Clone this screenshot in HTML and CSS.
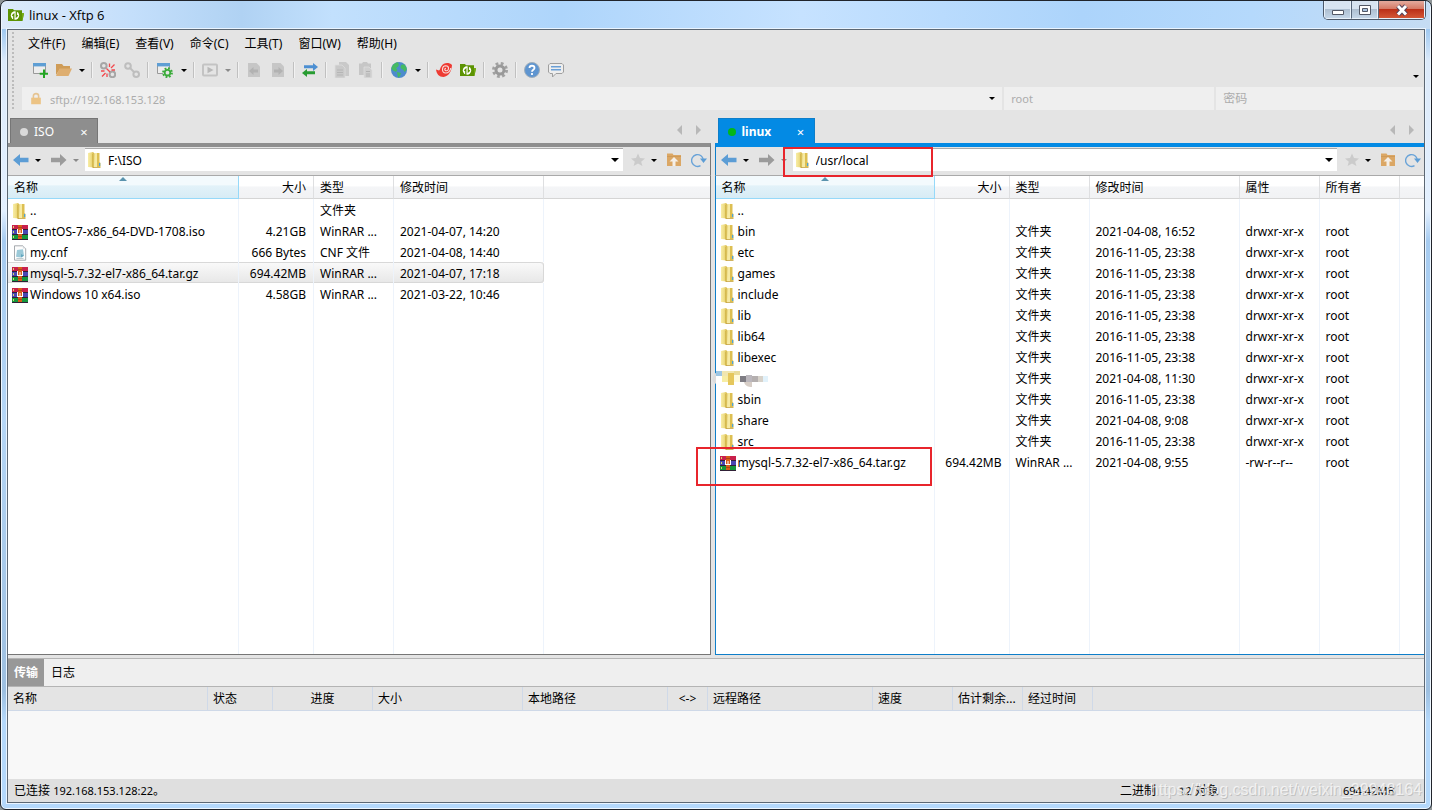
FILE: index.html
```html
<!DOCTYPE html>
<html lang="zh-CN">
<head>
<meta charset="utf-8">
<title>linux - Xftp 6</title>
<link rel="stylesheet" href="styles.css">
</head>
<body>
<svg class="defs" aria-hidden="true">
  <defs>
    <linearGradient id="gFold" x1="0" x2="1"><stop offset="0" stop-color="#f8eda6"/><stop offset=".55" stop-color="#eedc83"/><stop offset="1" stop-color="#d3b340"/></linearGradient>
    <linearGradient id="gLeaf" x1="0" x2="1"><stop offset="0" stop-color="#c9a938"/><stop offset="1" stop-color="#f3e390"/></linearGradient>
  </defs>
  <symbol id="folder" viewBox="0 0 16 16"><path fill="url(#gFold)" d="M1 1 6 0l1 1v14.500L1 15z"/><path fill="url(#gLeaf)" d="M5.500 2 8 1v14l-2.500 1z"/><path fill="#f6eaa4" d="M8 1h2v14H7z"/><path fill="#ddbf52" d="M10 1h2.500v9l1 1v4H10z"/><path fill="#c5a13a" d="M6 15h7.500v.8H6z"/><path fill="#4ca3dc" d="M12 11h1.200v3H12z"/></symbol>
  <symbol id="rar" viewBox="0 0 16 16"><path fill="#c9204c" d="M0 1h16v5H0z"/><path fill="#4846b4" d="M0 6h16v4H0z"/><path fill="#15963c" d="M0 10h16v5H0z"/><path fill="#302036" d="M0 5h16v1H0zM0 10h16v1H0zM0 15h16v1H0z"/><path fill="#d6dc68" d="M1 2h1v2H1zM1 7h1v2H1zM1 12h1v2H1z"/><path fill="#d95c18" d="M6 1h4v14H6z"/><path fill="#a9471b" d="M6 3h4v1H6zM6 12h4v1H6z"/><path fill="#fff" d="M5 5h1v4h4V5h1v5H5zM7.500 6h1v3h-1z"/></symbol>
  <symbol id="cnf" viewBox="0 0 16 16"><path fill="#fdfdfd" stroke="#8f969b" stroke-width=".8" d="M2.500.8h8.300l2.900 2.800v11.600H2.500z"/><path fill="#d5dadd" d="M10.800.8v2.800h2.900z"/><path fill="#9bc9d8" d="m5 5 6-.8 1 6.600-3 1.600-5-.6z"/><path fill="#64a7bf" d="m9 9 3 1.800-3 1.600z"/><path stroke="#b5c6cc" d="M4.500 13.400h7"/></symbol>
  <symbol id="app" viewBox="0 0 16 16"><path fill="#5c9303" d="M0 2h5l1 1.200h8V6l2 .2L14.500 14H0z"/><path fill="#77ad16" d="M14 6h2l-1.600 8z"/><circle cx="7" cy="8.500" r="4.200" fill="#fff"/><path fill="none" stroke="#5c9303" stroke-width="1.300" d="M5.800 13V7.200L4.300 8.700M8.300 4v5.800l1.500-1.500"/></symbol>
  <symbol id="newwin" viewBox="0 0 16 16"><path fill="#ededed" stroke="#999" d="M1.500 1.500h12v10h-12z"/><path fill="#5e9ed4" d="M1 1h13v3.400H1z"/><path stroke="#23a523" stroke-width="2" d="M12 7.500V16M7.700 11.800H16"/></symbol>
  <symbol id="open" viewBox="0 0 16 16"><path fill="#cf9c57" d="M0 2h6l1.500 2H14v3H4l-4 6z"/><path fill="#deae70" d="M3.500 6.500H16L12.500 14H0z"/></symbol>
  <symbol id="chain" viewBox="0 0 16 16"><g fill="none" stroke="#bebebe" stroke-width="2"><circle cx="4" cy="4" r="2.800"/><circle cx="12.200" cy="12.200" r="2.800"/><path d="m5.500 5.500 5 5"/></g></symbol>
  <symbol id="unchain" viewBox="0 0 16 16"><g fill="none" stroke="#a6a6a6" stroke-width="2"><circle cx="3.800" cy="3.800" r="2.800"/><circle cx="12.400" cy="12.400" r="2.800"/></g><path stroke="#f2484d" stroke-width="1.300" d="m6.500 6.500 3.500 3.500M9.500 5V1.500M11 6l3.500-3.500M11.500 8H15M4.500 9H1M5.500 11 2 14.500M7 11.500V15"/></symbol>
  <symbol id="wingear" viewBox="0 0 16 16"><path fill="#ededed" stroke="#999" d="M.5 1.500h12v10H.5z"/><path fill="#5e9ed4" d="M0 1h13v3.400H0z"/><circle cx="10.500" cy="10.700" r="4.600" fill="#e4e4e4"/><circle cx="10.500" cy="10.700" r="4.400" fill="none" stroke="#3aab3a" stroke-width="2" stroke-dasharray="1.800 1.650"/><circle cx="10.500" cy="10.700" r="2.800" fill="none" stroke="#3aab3a" stroke-width="1.800"/></symbol>
  <symbol id="play" viewBox="0 0 16 16"><rect x="1" y="2.500" width="14" height="11" rx="1" fill="none" stroke="#c3c3c3" stroke-width="2"/><path fill="#b8b8b8" d="m5.500 4.800 6 3.200-6 3.200z"/></symbol>
  <symbol id="docl" viewBox="0 0 16 16"><path fill="#c6c6c6" d="M2 1h8.500L14 4.500V15H2z"/><path fill="#b2b2b2" d="m3 9 4.500-4v2.500H12v3H7.500V13z"/></symbol>
  <symbol id="docr" viewBox="0 0 16 16"><path fill="#c6c6c6" d="M2 1h8.500L14 4.500V15H2z"/><path fill="#b2b2b2" d="m13 9-4.500-4v2.500H4v3h4.500V13z"/></symbol>
  <symbol id="swap" viewBox="0 0 16 16"><path fill="#4c8fd2" d="M2 3.300h9V1l5 4-5 4V6.200H2z"/><path fill="#289c32" d="M13 9.300H5V7l-5 4 5 4v-2.700h8z"/></symbol>
  <symbol id="copy" viewBox="0 0 16 16"><path fill="#c9c9c9" d="M5 0h7l3 3v11H5z"/><path fill="#c9c9c9" stroke="#dedede" stroke-width=".7" d="M1 3h7l3 3v10H1z"/><path stroke="#b5b5b5" d="M3 8h6M3 10.500h6M3 13h6"/></symbol>
  <symbol id="paste" viewBox="0 0 16 16"><path fill="#c6c6c6" d="M1 1.500h3L5 0h4l1 1.500h3V13H1z"/><path fill="#cecece" stroke="#e0e0e0" stroke-width=".7" d="M6 5h5l3 3v8H6z"/><path stroke="#b2b2b2" d="M8 9.500h4M8 12h4M8 14h4"/></symbol>
  <symbol id="globe" viewBox="0 0 16 16"><circle cx="8" cy="8" r="8" fill="#4d8bcd"/><path fill="#45ba62" d="M1.500 3.500C3 1.500 5 .4 7 .2L8 3 6.800 5 5 6l1.500 2L5 10 2 8.500.3 6.500zM10 3l3-.8c1.800 1.500 2.700 3.400 2.800 5.300l-2 2.500-2-2.500L9.500 6zM6 10l4 1-1 3-2 1.700z"/></symbol>
  <symbol id="swirl" viewBox="0 0 16 16"><path fill="#ee3b33" d="M5.500 4C7.500.5 13 0 16 3c-.3 6.500-3.500 11.500-8.500 12C3 15 .5 12 0 7.500l3 1c1.300-.8 1.200-2.700 2.500-4.500z"/><path fill="none" stroke="#f9e0de" stroke-width="1.100" d="M10 6.300c-1.600 0-1.700 2.600.3 2.500 2.900 0 3.200-5-.5-5-4.200.1-4.500 7-.2 7.200 2.600.2 4.900-2.500 5.200-5"/></symbol>
  <symbol id="gear" viewBox="0 0 16 16"><circle cx="8" cy="8" r="6.500" fill="none" stroke="#a1a1a1" stroke-width="3" stroke-dasharray="2.700 2.400"/><circle cx="8" cy="8" r="4" fill="none" stroke="#999" stroke-width="3"/></symbol>
  <symbol id="help" viewBox="0 0 16 16"><circle cx="8" cy="8" r="7.500" fill="#5f95d0" stroke="#9faebb"/><path fill="none" stroke="#fff" stroke-width="1.800" d="M5.500 6c0-3 5-3 5 0 0 1.800-2.500 1.700-2.500 3.700M8 11v2"/></symbol>
  <symbol id="chat" viewBox="0 0 16 16"><path fill="#eee" stroke="#9f9f9f" d="M2 1.500h12l1.500 1.500v7L14 11.500H8L4.500 15v-3.500H2L.5 10V3z"/><path stroke="#6a9fd6" stroke-width="1.500" d="M3 4.800h10M3 7.800h10"/></symbol>
  <symbol id="lock" viewBox="0 0 16 16"><path fill="none" stroke="#e6c492" stroke-width="1.800" d="M5 7V4.500C5 1 11 1 11 4.500V7"/><path fill="#ecc384" d="M2.500 6.500h11V14h-11z"/></symbol>
  <symbol id="back" viewBox="0 0 16 14"><path fill="#5c9dd5" d="m0 7 7-6v3.700h8.500v4.600H7V13z"/></symbol>
  <symbol id="fwd" viewBox="0 0 16 14"><path fill="#9b9b9b" d="M15.500 7 9 1v3.700H0v4.600h9V13z"/></symbol>
  <symbol id="star" viewBox="0 0 16 16"><path fill="#cbcbcb" d="m8 1.500 2 4.600 5 .4-3.800 3.200L12.400 14 8 11.500 3.600 14l1.200-4.300L1 6.500l5-.4z"/></symbol>
  <symbol id="up" viewBox="0 0 16 16"><path fill="#dba765" d="M1 1.500h5.500l1 1.500H15v11H1z"/><path fill="#cf9a58" d="M1 4h14v1H1z"/><path fill="#f5efe8" d="m8 5 4.500 4.500H9.500V14h-3V9.500h-3z"/></symbol>
  <symbol id="reload" viewBox="0 0 16 16"><path fill="none" stroke="#69a3d8" stroke-width="1.400" d="M12.400 8.500V8A5.900 5.900 0 1 0 9.500 13.600"/><path fill="#5c9dd5" d="M9 6.500h7L12.500 11z"/></symbol>
</svg>

<div class="window">
  <header class="titlebar">
    <svg class="i16"><use href="#app"/></svg>
    <h1>linux - Xftp 6</h1>
    <div class="winbtns">
      <button class="min" aria-label="最小化"><svg viewBox="0 0 14 14"><path fill="#fff" stroke="#535866" d="M1.500 7.500h11v4h-11z"/></svg></button>
      <button class="max" aria-label="最大化"><svg viewBox="0 0 14 14"><path fill="#fff" stroke="#535866" d="M1.500 2.500h11v9h-11z"/><path fill="#a9c3df" stroke="#535866" d="M4.500 5.500h5v3h-5z"/></svg></button>
      <button class="close" aria-label="关闭"><svg viewBox="0 0 14 14"><path stroke="#53435a" stroke-width="5" d="m3 3 8 8.500M11 3l-8 8.500"/><path stroke="#fff" stroke-width="3" d="m3 3 8 8.500M11 3l-8 8.500"/></svg></button>
    </div>
  </header>

  <main class="client">
    <div class="bars">
      <nav class="menu grip">
        <button>文件(F)</button><button>编辑(E)</button><button>查看(V)</button><button>命令(C)</button><button>工具(T)</button><button>窗口(W)</button><button>帮助(H)</button>
      </nav>
      <div class="toolbar grip">
        <button aria-label="新建"><svg class="i16"><use href="#newwin"/></svg></button>
        <button aria-label="打开"><svg class="i16"><use href="#open"/></svg></button><button class="dd" aria-label="打开选项"></button><i class="sep"></i>
        <button aria-label="断开"><svg class="i16"><use href="#unchain"/></svg></button>
        <button aria-label="重新连接"><svg class="i16"><use href="#chain"/></svg></button><i class="sep"></i>
        <button class="wide" aria-label="属性"><svg class="i16"><use href="#wingear"/></svg></button><button class="dd" aria-label="属性选项"></button><i class="sep"></i>
        <button aria-label="运行"><svg class="i16"><use href="#play"/></svg></button><button class="dd dim" aria-label="运行选项"></button><i class="sep"></i>
        <button aria-label="下载"><svg class="i16"><use href="#docl"/></svg></button>
        <button aria-label="上传"><svg class="i16"><use href="#docr"/></svg></button><i class="sep"></i>
        <button aria-label="同步"><svg class="i16"><use href="#swap"/></svg></button><i class="sep"></i>
        <button aria-label="复制"><svg class="i16"><use href="#copy"/></svg></button>
        <button aria-label="粘贴"><svg class="i16"><use href="#paste"/></svg></button><i class="sep"></i>
        <button class="wide" aria-label="网络"><svg class="i16"><use href="#globe"/></svg></button><button class="dd" aria-label="网络选项"></button><i class="sep"></i>
        <button aria-label="Xshell"><svg class="i16"><use href="#swirl"/></svg></button>
        <button aria-label="Xftp"><svg class="i16"><use href="#app"/></svg></button><i class="sep"></i>
        <button aria-label="设置"><svg class="i16"><use href="#gear"/></svg></button><i class="sep"></i>
        <button aria-label="帮助"><svg class="i16"><use href="#help"/></svg></button>
        <button aria-label="反馈"><svg class="i16"><use href="#chat"/></svg></button>
        <button class="dd more" aria-label="更多"></button>
      </div>
      <div class="address grip">
        <div class="host"><svg class="lock"><use href="#lock"/></svg><input aria-label="地址" placeholder="sftp://192.168.153.128"><button class="dd" aria-label="地址列表"></button></div>
        <input class="user" aria-label="用户名" placeholder="root">
        <input class="pass" type="password" aria-label="密码" placeholder="密码">
      </div>
    </div>

    <div class="panes">
      <section class="pane left">
        <div class="tabs"><div class="tab"><span class="dot"></span><span>ISO</span><button aria-label="关闭标签">×</button></div><div class="scroll"><button class="tl" aria-label="向左"></button><button class="tr" aria-label="向右"></button></div></div>
        <div class="nav">
          <button class="arrow" aria-label="后退"><svg><use href="#back"/></svg></button><button class="dd" aria-label="后退列表"></button>
          <button class="arrow" aria-label="前进"><svg><use href="#fwd"/></svg></button><button class="dd dim" aria-label="前进列表"></button>
          <div class="path"><svg class="i16"><use href="#folder"/></svg><input aria-label="本地路径" value="F:\ISO"><button class="dd big" aria-label="路径列表"></button></div>
          <div class="tools"><button aria-label="收藏"><svg class="i16"><use href="#star"/></svg></button><button class="dd" aria-label="收藏列表"></button><button aria-label="上级"><svg class="i16"><use href="#up"/></svg></button><button aria-label="刷新"><svg class="i16"><use href="#reload"/></svg></button></div>
        </div>
        <div class="list">
          <table>
            <colgroup><col class="c-lname"><col class="c75"><col class="c80"><col class="c150"><col></colgroup>
            <thead><tr><th class="sorted">名称</th><th class="num">大小</th><th>类型</th><th>修改时间</th><th></th></tr></thead>
            <tbody>
              <tr><td><svg class="i16"><use href="#folder"/></svg>..</td><td></td><td>文件夹</td><td></td><td></td></tr>
              <tr><td><svg class="i16"><use href="#rar"/></svg>CentOS-7-x86_64-DVD-1708.iso</td><td class="num">4.21GB</td><td>WinRAR ...</td><td>2021-04-07, 14:20</td><td></td></tr>
              <tr><td><svg class="i16"><use href="#cnf"/></svg>my.cnf</td><td class="num">666 Bytes</td><td>CNF 文件</td><td>2021-04-08, 14:40</td><td></td></tr>
              <tr class="sel"><td><svg class="i16"><use href="#rar"/></svg>mysql-5.7.32-el7-x86_64.tar.gz</td><td class="num">694.42MB</td><td>WinRAR ...</td><td>2021-04-07, 17:18</td><td></td></tr>
              <tr><td><svg class="i16"><use href="#rar"/></svg>Windows 10 x64.iso</td><td class="num">4.58GB</td><td>WinRAR ...</td><td>2021-03-22, 10:46</td><td></td></tr>
              <tr class="fill"><td></td><td></td><td></td><td></td><td></td></tr>
            </tbody>
          </table>
        </div>
      </section>

      <section class="pane right">
        <div class="tabs"><div class="tab"><span class="dot"></span><span>linux</span><button aria-label="关闭标签">×</button></div><div class="scroll"><button class="tl" aria-label="向左"></button><button class="tr" aria-label="向右"></button></div></div>
        <div class="nav">
          <button class="arrow" aria-label="后退"><svg><use href="#back"/></svg></button><button class="dd" aria-label="后退列表"></button>
          <button class="arrow" aria-label="前进"><svg><use href="#fwd"/></svg></button><button class="dd dim" aria-label="前进列表"></button>
          <div class="path"><svg class="i16"><use href="#folder"/></svg><input aria-label="远程路径" value="/usr/local"><button class="dd big" aria-label="路径列表"></button></div>
          <div class="tools"><button aria-label="收藏"><svg class="i16"><use href="#star"/></svg></button><button class="dd" aria-label="收藏列表"></button><button aria-label="上级"><svg class="i16"><use href="#up"/></svg></button><button aria-label="刷新"><svg class="i16"><use href="#reload"/></svg></button></div>
        </div>
        <div class="list">
          <table>
            <colgroup><col class="c-rname"><col class="c75"><col class="c80"><col class="c150"><col class="c80"><col class="c80"><col></colgroup>
            <thead><tr><th class="sorted">名称</th><th class="num">大小</th><th>类型</th><th>修改时间</th><th>属性</th><th>所有者</th><th></th></tr></thead>
            <tbody>
              <tr><td><svg class="i16"><use href="#folder"/></svg>..</td><td></td><td></td><td></td><td></td><td></td><td></td></tr>
              <tr><td><svg class="i16"><use href="#folder"/></svg>bin</td><td></td><td>文件夹</td><td>2021-04-08, 16:52</td><td>drwxr-xr-x</td><td>root</td><td></td></tr>
              <tr><td><svg class="i16"><use href="#folder"/></svg>etc</td><td></td><td>文件夹</td><td>2016-11-05, 23:38</td><td>drwxr-xr-x</td><td>root</td><td></td></tr>
              <tr><td><svg class="i16"><use href="#folder"/></svg>games</td><td></td><td>文件夹</td><td>2016-11-05, 23:38</td><td>drwxr-xr-x</td><td>root</td><td></td></tr>
              <tr><td><svg class="i16"><use href="#folder"/></svg>include</td><td></td><td>文件夹</td><td>2016-11-05, 23:38</td><td>drwxr-xr-x</td><td>root</td><td></td></tr>
              <tr><td><svg class="i16"><use href="#folder"/></svg>lib</td><td></td><td>文件夹</td><td>2016-11-05, 23:38</td><td>drwxr-xr-x</td><td>root</td><td></td></tr>
              <tr><td><svg class="i16"><use href="#folder"/></svg>lib64</td><td></td><td>文件夹</td><td>2016-11-05, 23:38</td><td>drwxr-xr-x</td><td>root</td><td></td></tr>
              <tr><td><svg class="i16"><use href="#folder"/></svg>libexec</td><td></td><td>文件夹</td><td>2016-11-05, 23:38</td><td>drwxr-xr-x</td><td>root</td><td></td></tr>
              <tr><td><svg class="mosaic" viewBox="0 0 56 18"><path fill="#dcdcdc" d="M5 2v12C-1 13-1 6 5 2z"/><path fill="#fff" d="M4 5h6v10H4z"/><path fill="#9dc6e3" d="M4 1h6v5H4z"/><path fill="#f0e6b0" d="M10 1h12v5H10z"/><path fill="#e9dc9b" d="M22 1h6v4h-6z"/><path fill="#f7eda4" d="M10 6h6v6h-6z"/><path fill="#e5c75c" d="M16 3h6v12h-6z"/><path fill="#fffbdc" d="M22 5h6v7h-6z"/><path fill="#7e7c83" d="M28 6h6v6h-6z"/><path fill="#bbb7bd" d="M34 5h6v7h-6z"/><path fill="#d7cec7" d="M32 12h8v5c-4 0-7-1-8-5z"/><path fill="#b4afaf" d="M40 6h6v6h-6z"/><path fill="#d7d2ca" d="M46 6h5v6h-5z"/><path fill="#e2f2fb" d="M51 6h5v6h-5z"/></svg></td><td></td><td>文件夹</td><td>2021-04-08, 11:30</td><td>drwxr-xr-x</td><td>root</td><td></td></tr>
              <tr><td><svg class="i16"><use href="#folder"/></svg>sbin</td><td></td><td>文件夹</td><td>2016-11-05, 23:38</td><td>drwxr-xr-x</td><td>root</td><td></td></tr>
              <tr><td><svg class="i16"><use href="#folder"/></svg>share</td><td></td><td>文件夹</td><td>2021-04-08, 9:08</td><td>drwxr-xr-x</td><td>root</td><td></td></tr>
              <tr><td><svg class="i16"><use href="#folder"/></svg>src</td><td></td><td>文件夹</td><td>2016-11-05, 23:38</td><td>drwxr-xr-x</td><td>root</td><td></td></tr>
              <tr><td><svg class="i16"><use href="#rar"/></svg>mysql-5.7.32-el7-x86_64.tar.gz</td><td class="num">694.42MB</td><td>WinRAR ...</td><td>2021-04-08, 9:55</td><td>-rw-r--r--</td><td>root</td><td></td></tr>
              <tr class="fill"><td></td><td></td><td></td><td></td><td></td><td></td><td></td></tr>
            </tbody>
          </table>
        </div>
        <div class="mark mark-path"></div>
        <div class="mark mark-file"></div>
      </section>
    </div>

    <section class="transfer">
      <div class="ttabs"><button class="on">传输</button><button>日志</button></div>
      <table class="queue">
        <colgroup><col class="q200"><col class="q65"><col class="q100"><col class="q150"><col class="q145"><col class="q40"><col class="q165"><col class="q80"><col class="q70"><col class="q70"><col></colgroup>
        <thead><tr><th>名称</th><th>状态</th><th class="mid">进度</th><th>大小</th><th>本地路径</th><th class="mid">&lt;-&gt;</th><th>远程路径</th><th>速度</th><th>估计剩余...</th><th>经过时间</th><th></th></tr></thead>
      </table>
    </section>

    <footer class="status">
      <span class="conn">已连接 <span class="lat">192.168.153.128:22</span>。</span><span class="mode">二进制</span><span class="count"><span class="lat">12</span> 对象</span><span class="size lat">694.42MB</span>
      <div class="watermark">https://blog.csdn.net/weixin_39948164</div>
    </footer>
  </main>
</div>
</body>
</html>
```
FILE: styles.css
```css
* { box-sizing: border-box; }
html, body { height: 100%; }
body {
  margin: 0;
  background: #8d9496;
  color: #000;
  font: 12px/16px "Noto Sans", "Noto Sans CJK SC", sans-serif;
}
button, input { font: inherit; color: inherit; border: 0; padding: 0; margin: 0; background: none; }
.defs { position: absolute; width: 0; height: 0; }
.i16 { width: 16px; height: 16px; flex: none; display: block; }

.window {
  height: 100vh;
  min-height: 600px;
  display: flex;
  flex-direction: column;
  padding: 0 6px 6px;
  border: 1px solid #20242b;
  border-radius: 7px 7px 6px 6px;
  background: linear-gradient(#c4dffa, #9fc8f0 28px, #dceafa 60px, #e3f0ff 210px, #a6cbf0 240px, #b5d6f6 420px, #9dbfe0 690px, #b4d8fb 720px);
  box-shadow: inset 0 0 0 1px #eef7ff;
}
.titlebar {
  height: 28px;
  flex: none;
  display: flex;
  align-items: center;
  margin: 0 -5px;
  padding-left: 6px;
  background: linear-gradient(90deg, #dceafa, #c4dffb 130px, #b0d2f3 240px, #c2e0fd 330px, #aed5fb 560px, #c6e2ff 800px, #acd4fb 1080px, #b5d9fc 1250px, #c5dcf3);
  border-radius: 6px 6px 0 0;
}
h1 { margin: 0 0 0 5px; font: 13px/16px "Open Sans", sans-serif; }
.winbtns { display: flex; align-self: flex-start; margin: 0 4px 0 auto; border: 1px solid #4c5869; border-top: 0; border-radius: 0 0 5px 5px; overflow: hidden; }
.winbtns button { width: 27px; height: 18px; display: grid; place-items: center; border: 1px solid #e8f1fa; border-top: 0; background: linear-gradient(#d8e4f1 45%, #aebfd1 50%, #c4d6e8); }
.winbtns button + button { border-left: 1px solid #57667a; }
.winbtns .close { width: 47px; background: linear-gradient(#e2a698 5%, #d57a66 45%, #bb3018 50%, #d35636); }
.winbtns svg { width: 14px; height: 14px; }

.client {
  flex: 1;
  min-height: 0;
  display: flex;
  flex-direction: column;
  border: 1px solid #5c6773;
  background: #e4e4e4;
  box-shadow: 0 0 0 1px #e9f4ff;
}
.bars { padding: 2px 0 0 4px; }
.grip { background: repeating-linear-gradient(#bcbcbc 0 2px, transparent 2px 4px) 0 0 / 2px 100% no-repeat; }
.menu { display: flex; gap: 16px; height: 24px; align-items: center; padding-left: 16px; }
.toolbar { display: flex; align-items: center; height: 31px; padding: 0 0 3px 16px; }
.toolbar button { width: 24px; height: 24px; display: grid; place-items: center; }
.toolbar .wide { width: 26px; }
.sep { width: 8px; height: 16px; background: linear-gradient(90deg, transparent 3px, #c0c0c0 3px 4px, #f2f2f2 4px 5px, transparent 5px); }
.dd, .toolbar .dd { width: 12px; height: 16px; flex: none; display: grid; place-items: center; }
.dd::before { content: ""; border: 3px solid transparent; border-top-color: #000; border-bottom: 0; }
.dd.dim::before { border-top-color: #8a8a8a; }
.dd.big::before { border-width: 4px 4px 0; }
.toolbar .more { margin: 12px 2px 0 auto; }
.address { display: flex; gap: 2px; height: 23px; padding: 0 1px 0 10px; }
.address input::placeholder { color: #acacac; opacity: 1; }
.host { flex: 970; display: flex; align-items: center; background: #efefef; padding: 0 4px 0 7px; }
.host input { flex: 1; min-width: 0; margin-left: 7px; padding-top: 2px; font-size: 11px; }
.lock { width: 14px; height: 14px; }
.user, .pass { min-width: 0; padding: 0 7px; background: #efefef; }
.user { flex: 196; font-size: 11px; }
.pass { flex: 193; }

.panes { flex: 1; min-height: 0; display: flex; gap: 4px; padding-top: 8px; }
.pane { --edge: #767676; --tab: #8e8e8e; min-width: 0; display: flex; flex-direction: column; position: relative; }
.left { flex: 702; }
.right { flex: 709; --edge: #0e7ec9; --tab: #038ae4; }
.tabs { display: flex; align-items: flex-end; height: 25px; padding-left: 2px; flex: none; }
.right .tabs { padding-left: 3px; }
.tab { display: flex; align-items: center; width: 88px; height: 25px; padding: 1px 8px 0 9px; background: var(--tab); color: #fff; border: 1px solid var(--edge); border-bottom: 0; }
.right .tab { width: 97px; font-weight: bold; }
.dot { width: 8px; height: 8px; margin-right: 6px; border-radius: 50%; background: #d9d9d9; }
.right .dot { background: #03b719; }
.tab button { margin-left: auto; width: 10px; font: 13px/16px "Noto Sans", sans-serif; }
.scroll { display: flex; gap: 14px; margin: 0 10px 8px auto; }
.scroll button { border: 5px solid transparent; height: 10px; }
.scroll .tl { border-right-color: #b8b8b8; border-left-width: 0; }
.scroll .tr { border-left-color: #b8b8b8; border-right-width: 0; }
.nav { display: flex; align-items: center; height: 33px; flex: none; padding: 2px 3px 4px 5px; border-top: 4px solid var(--tab); border-bottom: 1px solid #a9a9a9; border-right: 1px solid var(--edge); }
.right .nav, .right .list { border-left: 1px solid var(--edge); border-right: 0; }
.arrow { width: 17px; height: 16px; }
.arrow svg { width: 16px; height: 14px; display: block; }
.nav > .dd { margin: 0 7px 0 2px; }
.path { flex: 1; min-width: 0; display: flex; align-items: center; height: 22px; margin-left: -4px; background: #fff; box-shadow: 0 -1px #aaa; padding: 0 2px; }
.path input { flex: 1; min-width: 0; margin-left: 5px; padding-top: 2px; }
.tools { display: flex; align-items: center; gap: 4px; margin-left: 7px; }
.tools .dd { margin: 0 2px 0 -2px; }
.tools button:last-child { margin-left: 5px; }
.list { flex: 1; min-height: 0; overflow: hidden; background: #fff; border-right: 1px solid var(--edge); border-bottom: 1px solid var(--edge); }
.right .list { overflow: visible; }

table { width: 100%; border-collapse: separate; border-spacing: 0; table-layout: fixed; }
.list table { height: 100%; }
th, td { text-align: left; font-weight: normal; white-space: nowrap; padding: 2px 6px 0; overflow: hidden; }
th { height: 23px; border-right: 1px solid #dedfe1; border-bottom: 1px solid #d5d5d5; background: linear-gradient(#fff 45%, #f4f5f7 50%, #f1f2f4); }
td { height: 21px; border-right: 1px solid #edf3fb; }
th:last-child, td:last-child { border-right: 0; }
th:first-child { padding-left: 6px; }
.sorted { border-color: #96d9f9; background: linear-gradient(#f3fafd 40%, #e2f2f9 45%, #d7ecf5); position: relative; }
.sorted::after { content: ""; position: absolute; top: 1px; left: 50%; margin-left: -4px; border: 4px solid transparent; border-top: 0; border-bottom-color: #5a93ae; }
.num { text-align: right; padding-right: 7px; }
td:first-child { padding-left: 4px; }
td .i16 { float: left; margin-right: 2px; }
.fill td { height: auto; }
.mosaic { display: block; width: 56px; height: 18px; margin-left: -8px; }
.right td:first-child { overflow: visible; }
.sel td:nth-child(-n+4) { background: linear-gradient(#fafafa, #e7e7e7); box-shadow: inset 0 1px #d8d8d8, inset 0 -1px #d8d8d8; }
.sel td:nth-child(4) { border-right-color: #d8d8d8; border-radius: 0 3px 3px 0; }
.c-lname { width: 231px; }
.c-rname { width: 219px; }
.c75 { width: 75px; }
.c80 { width: 80px; }
.c150 { width: 150px; }

.mark { position: absolute; border: 2px solid #e8252c; }
.mark-path { left: 68px; top: 29px; width: 150px; height: 30px; }
.mark-file { left: -19px; top: 329px; width: 236px; height: 39px; }

.transfer { margin-top: 3px; min-height: 121px; background: #f8f8f8; flex: none; }
.ttabs { display: flex; height: 29px; background: #efefef; border-top: 1px solid #b4b4b4; border-bottom: 1px solid #b4b4b4; }
.ttabs button { padding: 0 7px; }
.ttabs .on { background: #989898; color: #fff; padding: 0 6px; font-weight: bold; }
.queue th { height: 24px; background: #e4e4e4; border-color: #cfd9e8; padding: 0 5px; }
.queue .mid { text-align: center; }
.q200 { width: 200px; }
.q65 { width: 65px; }
.q100 { width: 100px; }
.q150 { width: 150px; }
.q145 { width: 145px; }
.q40 { width: 40px; }
.q165 { width: 165px; }
.q80 { width: 80px; }
.q70 { width: 70px; }

.status { position: relative; display: flex; align-items: center; height: 23px; flex: none; padding: 0 6px; background: #dfdfdf; }
.lat { font-size: 11px; }
.conn { flex: 1; }
.mode { width: 59px; }
.count { width: 164px; }
.size { width: 75px; }
.watermark { position: absolute; right: 2px; top: 1px; font: 16px/20px "Liberation Sans", sans-serif; color: rgba(250, 250, 250, .75); text-shadow: 1px 1px rgba(120, 120, 120, .3); white-space: nowrap; }
```
